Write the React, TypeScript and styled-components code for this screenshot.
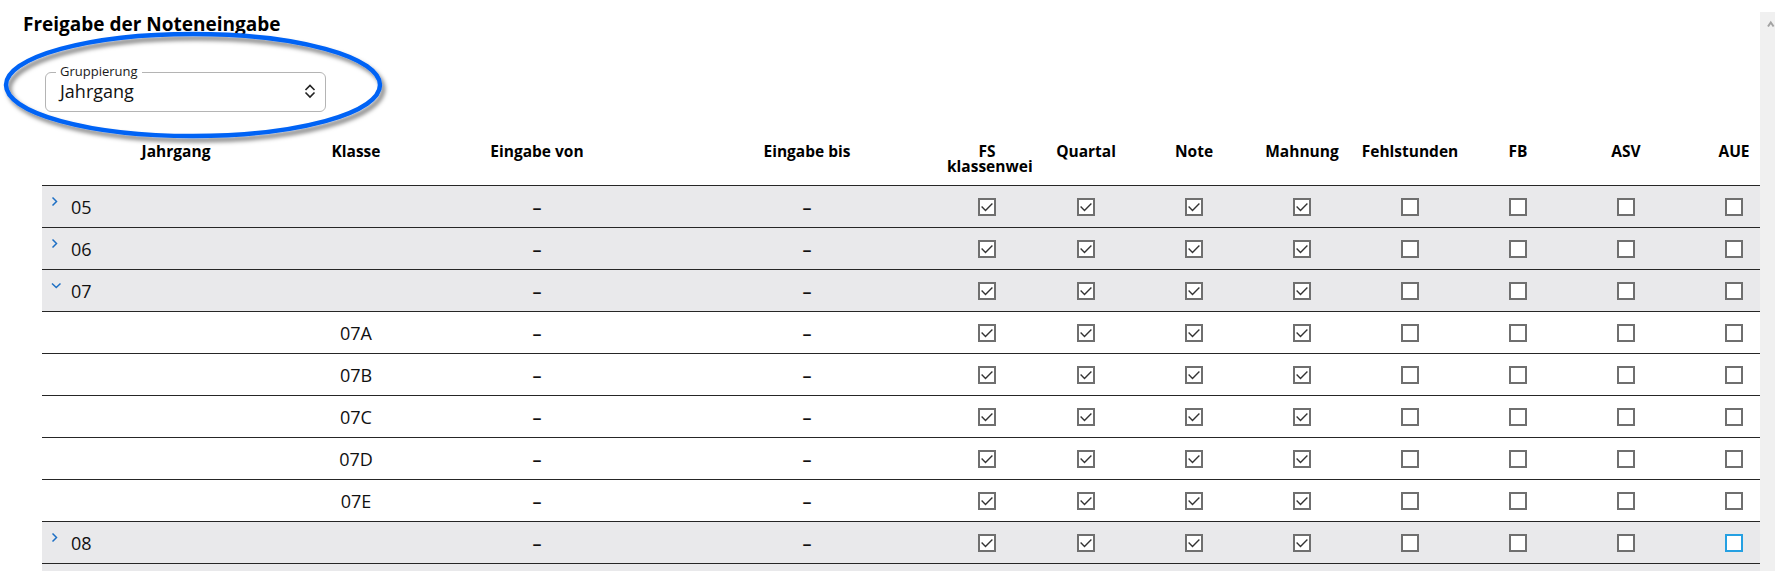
import React from 'react';
import styled, { createGlobalStyle } from 'styled-components';

const GlobalStyle = createGlobalStyle`
  html, body {
    margin: 0;
    padding: 0;
    background: #fff;
    overflow: hidden;
  }
  body {
    font-family: "Open Sans", "Noto Sans", Arial, sans-serif;
    color: #111;
  }
  * { box-sizing: border-box; }
`;

// Jahrgang, Klasse, Eingabe von, Eingabe bis, FS, Quartal ... AUE
const COLUMNS = '268px 92px 270px 270px 90px repeat(7, 108px)';

const Page = styled.div`
  display: flex;
  width: 100vw;
  height: 100vh;
`;

const Main = styled.main`
  position: relative;
  flex: 1;
  min-width: 0;
  overflow: hidden;
  padding-top: 10px;
`;

const ScrollTrack = styled.div`
  flex-shrink: 0;
  width: 15px;
  margin-top: 12px;
  background: #f0f0f0;
`;

const Title = styled.h1`
  margin: 0 0 0 23px;
  font-size: 19px;
  line-height: 28px;
  font-weight: 700;
  color: #000;
`;

const SelectBox = styled.div`
  position: relative;
  margin: 34px 0 0 45px;
  width: 281px;
  height: 40px;
  padding: 0 9px 2px 14px;
  border: 1px solid #b4b4b4;
  border-radius: 6px;
  display: flex;
  align-items: center;
  justify-content: space-between;
`;

const SelectLabel = styled.span`
  position: absolute;
  left: 10px;
  top: -10px;
  padding: 0 4px;
  background: #fff;
  font-size: 13px;
  line-height: 16px;
  color: #1a1a1a;
`;

const SelectValue = styled.span`
  font-size: 18px;
  line-height: 22px;
  color: #111;
`;

const Annotation = styled.svg`
  position: absolute;
  left: 0;
  top: 25px;
  pointer-events: none;
`;

const Table = styled.div`
  margin-left: 42px;
`;

const HeaderRow = styled.div`
  display: grid;
  grid-template-columns: ${COLUMNS};
  width: 1746px;
  height: 73px;
  padding-top: 29px;
  align-items: start;
`;

const HeaderCell = styled.div`
  padding: 0 5px;
  font-size: 15.5px;
  font-weight: 700;
  line-height: 21px;
  text-align: center;
  color: #000;
  overflow-x: clip;
  overflow-y: visible;
`;

// a second header line sits tight under the first one
const HeaderLine = styled.span<{ $tight?: boolean }>`
  display: block;
  white-space: nowrap;
  margin-top: ${p => (p.$tight ? '-6px' : '0')};
`;

const Row = styled.div<{ $group?: boolean }>`
  display: grid;
  grid-template-columns: ${COLUMNS};
  width: 1746px;
  height: 42px;
  border-top: 1px solid #262626;
  background: ${p => (p.$group ? '#e9e9eb' : '#fff')};
  align-items: center;
  font-size: 18px;
  line-height: 22px;
`;

const GroupCell = styled.div`
  display: flex;
  align-items: center;
  gap: 8px;
  padding-left: 5px;
`;

const Toggle = styled.svg`
  flex-shrink: 0;
  width: 16px;
  height: 16px;
  margin-bottom: 9px;
`;

const Cell = styled.div`
  text-align: center;
`;

const Dash = styled(Cell)`
  font-weight: 600;
`;

const CheckCell = styled.div`
  display: flex;
  justify-content: center;
`;

const Box = styled.span<{ $focus?: boolean }>`
  display: inline-flex;
  align-items: center;
  justify-content: center;
  width: 18px;
  height: 18px;
  border: 2px solid ${p => (p.$focus ? '#25a0e2' : '#6f6f6f')};
  background: #fff;
`;

const Checkbox = ({ checked, focus }: { checked: boolean; focus?: boolean }) => (
  <Box $focus={focus}>
    {checked && (
      <svg width="14" height="14" viewBox="0 0 14 14">
        <path d="M1.6 6.6 L5.5 10.4 L12.4 3.6" fill="none" stroke="#333" strokeWidth="1.4" />
      </svg>
    )}
  </Box>
);

const FLAGS = [true, true, true, true, false, false, false, false];

const HEADERS = [['Jahrgang'], ['Klasse'], ['Eingabe von'], ['Eingabe bis'], ['FS', 'klassenweise'], ['Quartal'], ['Note'], ['Mahnung'], ['Fehlstunden'], ['FB'], ['ASV'], ['AUE']];

const groups = [
  { id: '05' },
  { id: '06' },
  { id: '07', open: true, classes: ['07A', '07B', '07C', '07D', '07E'] },
  { id: '08', focusLast: true },
];

const Flags = ({ focusLast }: { focusLast?: boolean }) => (
  <>
    {FLAGS.map((f, i) => (
      <CheckCell key={i}>
        <Checkbox checked={f} focus={focusLast && i === FLAGS.length - 1} />
      </CheckCell>
    ))}
  </>
);

const App = () => {
  return (
    <Page>
      <GlobalStyle />
      <Main>
        <Title>Freigabe der Noteneingabe</Title>
        <SelectBox>
          <SelectLabel>Gruppierung</SelectLabel>
          <SelectValue>Jahrgang</SelectValue>
          <svg width="12" height="16" viewBox="0 0 12 16">
            <path d="M1.5 7 L6 2.5 L10.5 7 M1.5 9.5 L6 14 L10.5 9.5" fill="none" stroke="#222" strokeWidth="1.6" />
          </svg>
        </SelectBox>

        <Table>
          <HeaderRow>
            {HEADERS.map(lines => (
              <HeaderCell key={lines.join(' ')}>
                {lines.map((l, i) => (
                  <HeaderLine key={l} $tight={i > 0}>{l}</HeaderLine>
                ))}
              </HeaderCell>
            ))}
          </HeaderRow>
          {groups.map(g => (
            <React.Fragment key={g.id}>
              <Row $group>
                <GroupCell>
                  <Toggle viewBox="0 0 16 16">
                    {g.open ? (
                      <path d="M5 5.5 L9.25 9.5 L13.5 5.5" fill="none" stroke="#1d6fc4" strokeWidth="1.5" />
                    ) : (
                      <path d="M5.5 3.5 L9.5 7.5 L5.5 11.5" fill="none" stroke="#1d6fc4" strokeWidth="1.5" />
                    )}
                  </Toggle>
                  {g.id}
                </GroupCell>
                <Cell />
                <Dash>–</Dash>
                <Dash>–</Dash>
                <Flags focusLast={g.focusLast} />
              </Row>
              {g.open &&
                g.classes?.map(c => (
                  <Row key={c}>
                    <Cell />
                    <Cell>{c}</Cell>
                    <Dash>–</Dash>
                    <Dash>–</Dash>
                    <Flags />
                  </Row>
                ))}
            </React.Fragment>
          ))}
          {/* next group row, only its top edge is in view */}
          <Row $group />
        </Table>

        <Annotation width="400" height="125" viewBox="0 0 400 125">
          <defs>
            <filter id="markShadow" x="-10%" y="-20%" width="120%" height="150%">
              <feDropShadow dx="3" dy="4" stdDeviation="2" floodColor="#000" floodOpacity="0.5" />
            </filter>
          </defs>
          <ellipse cx="193" cy="60" rx="187" ry="51" fill="none" stroke="#0563f5" strokeWidth="4.5" filter="url(#markShadow)" />
        </Annotation>
      </Main>
      <ScrollTrack>
        <svg width="15" height="15" viewBox="0 0 15 15">
          <path d="M8 12.5 L10.8 8.5 L13.6 12.5" fill="none" stroke="#a3a3a3" strokeWidth="2" />
        </svg>
      </ScrollTrack>
    </Page>
  );
};

export default App;
